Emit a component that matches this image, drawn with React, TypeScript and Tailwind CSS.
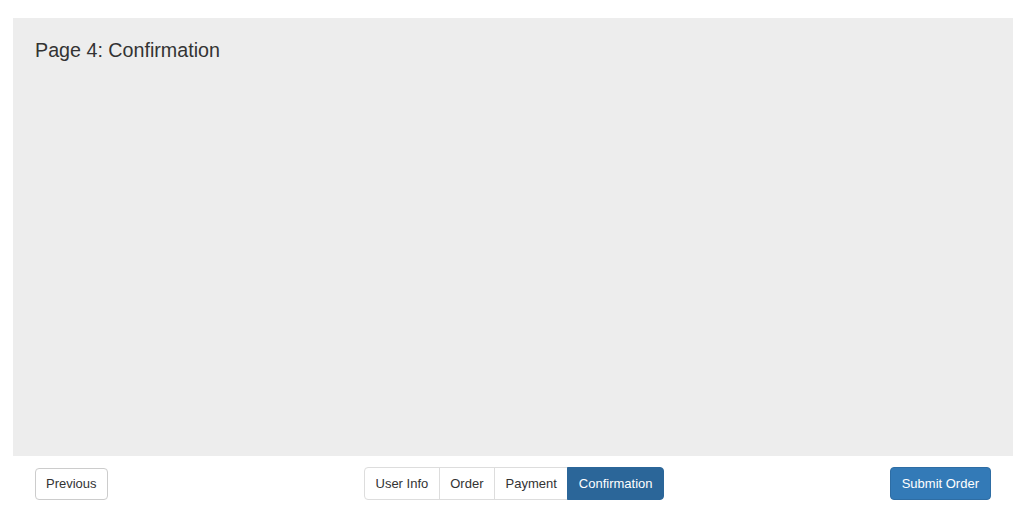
import React from "react";

export default function App() {
  const steps = ["User Info", "Order", "Payment", "Confirmation"];
  return (
    <div
      className="w-[1024px] h-[512px] bg-white overflow-hidden pt-[18px] pl-[13px] pr-[11px]"
      style={{ fontFamily: '"Liberation Sans", Arial, sans-serif' }}
    >
      <div className="h-[438px] bg-[#ededed] pt-[21px] px-[22px]">
        <h1 className="text-[19.7px] leading-[23px] text-[#333] font-normal">Page 4: Confirmation</h1>
      </div>
      <div className="flex items-center mt-[11px] pl-[22px] pr-[22px]">
        <div className="flex-1 flex">
          <button className="h-[32px] px-[10px] border border-[#ccc] rounded-[4px] bg-white text-[13px] text-[#333] leading-[18px]">
            Previous
          </button>
        </div>
        <div className="flex ml-[2px]">
          {steps.map((s, i) => {
            const active = i === steps.length - 1;
            return (
              <div
                key={s}
                className={
                  "h-[33px] flex items-center px-[10.5px] text-[13px] leading-[18px] border " +
                  (i > 0 ? "-ml-px " : "") +
                  (i === 0 ? "rounded-l-[4px] " : "") +
                  (active
                    ? "bg-[#2b6699] border-[#2b6699] text-white rounded-r-[4px] relative"
                    : "bg-white border-[#ddd] text-[#333]")
                }
              >
                {s}
              </div>
            );
          })}
        </div>
        <div className="flex-1 flex justify-end">
          <button className="h-[33px] px-[11px] border border-[#2e6da4] rounded-[4px] bg-[#337ab7] text-[13px] text-white leading-[18px]">
            Submit Order
          </button>
        </div>
      </div>
    </div>
  );
}
